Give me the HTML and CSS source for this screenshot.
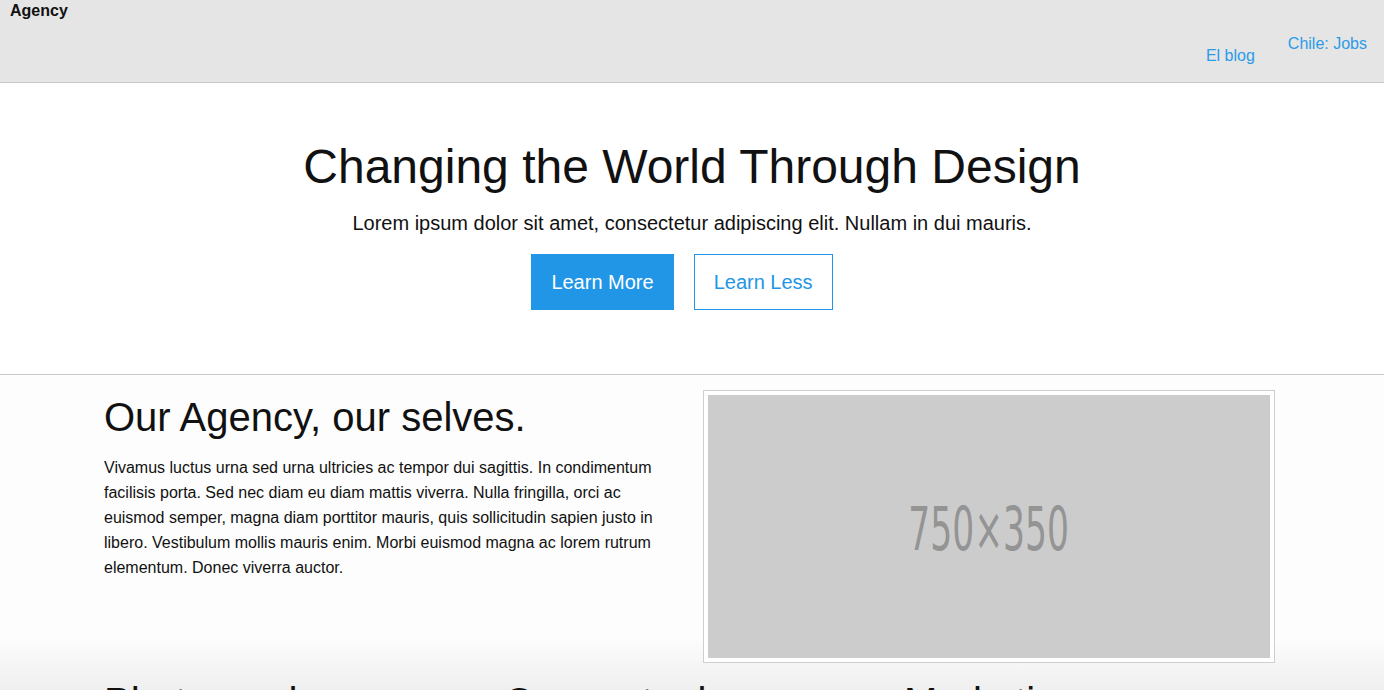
FILE: index.html
```html
<!DOCTYPE html>
<html lang="en">
<head>
<meta charset="utf-8">
<title>Agency</title>
<link rel="stylesheet" href="styles.css">
</head>
<body>
<header class="site-header">
  <div class="brand">Agency</div>
  <nav class="nav">
    <a class="nav-link nav-link-low" href="#">El blog</a>
    <a class="nav-link nav-link-high" href="#">Chile: Jobs</a>
  </nav>
</header>

<section class="hero">
  <h1 class="hero-title">Changing the World Through Design</h1>
  <p class="hero-lead">Lorem ipsum dolor sit amet, consectetur adipiscing elit. Nullam in dui mauris.</p>
  <div class="hero-actions">
    <a class="btn btn-solid" href="#">Learn More</a>
    <a class="btn btn-outline" href="#">Learn Less</a>
  </div>
</section>

<div class="lower">
  <section class="about container">
    <div class="about-text">
      <h2 class="section-title">Our Agency, our selves.</h2>
      <p class="about-copy">Vivamus luctus urna sed urna ultricies ac tempor dui sagittis. In condimentum facilisis porta. Sed nec diam eu diam mattis viverra. Nulla fringilla, orci ac euismod semper, magna diam porttitor mauris, quis sollicitudin sapien justo in libero. Vestibulum mollis mauris enim. Morbi euismod magna ac lorem rutrum elementum. Donec viverra auctor.</p>
    </div>
    <div class="thumb">
      <div class="thumb-inner"><span class="thumb-label">750×350</span></div>
    </div>
  </section>

  <section class="features container">
    <div class="feature"><h2 class="section-title">Photography</h2></div>
    <div class="feature"><h2 class="section-title">Conceptual</h2></div>
    <div class="feature"><h2 class="section-title">Marketing</h2></div>
  </section>
</div>
</body>
</html>
```

FILE: styles.css
```css
html, body {
  margin: 0;
  padding: 0;
}

body {
  font-family: "Liberation Sans", Arial, sans-serif;
  color: #111;
  background: #fff;
  overflow: hidden;
}

a {
  text-decoration: none;
}

.site-header {
  height: 82px;
  background: #e5e5e5;
  border-bottom: 1px solid #c8c8c8;
  display: flex;
  justify-content: space-between;
  align-items: flex-start;
  padding: 0 17px 0 10px;
}

.brand {
  font-weight: bold;
  font-size: 16px;
  line-height: 20px;
  margin-top: 1px;
}

.nav {
  display: flex;
  gap: 33px;
  align-items: flex-start;
}

.nav-link {
  color: #2b9be8;
  font-size: 16px;
  line-height: 20px;
}

.nav-link-low {
  margin-top: 46px;
}

.nav-link-high {
  margin-top: 34px;
}

.hero {
  text-align: center;
  padding: 56px 0 64px;
  border-bottom: 1px solid #c8c8c8;
}

.hero-title {
  margin: 0;
  font-weight: normal;
  font-size: 48px;
  line-height: 55px;
}

.hero-lead {
  margin: 17px 0 19px;
  font-size: 20px;
  line-height: 24px;
}

.hero-actions {
  display: flex;
  justify-content: center;
}

.btn {
  display: inline-block;
  font-size: 20px;
  line-height: 24px;
  padding: 16px 20px;
  box-sizing: border-box;
  height: 56px;
  margin-right: 20px;
}

.btn-solid {
  background: #2196e6;
  color: #fff;
}

.btn-outline {
  border: 1px solid #2196e6;
  color: #2196e6;
  padding: 15px 19px;
}

.lower {
  background: linear-gradient(to bottom, #fdfdfd 0, #fdfdfd 262px, #efefef 315px);
  height: 315px;
}

.container {
  width: 1171px;
  margin-left: 104px;
}

.about {
  display: grid;
  grid-template-columns: 570px 572px;
  column-gap: 29px;
  padding-top: 15px;
}

.section-title {
  margin: 0;
  font-weight: normal;
  font-size: 40px;
  line-height: 46px;
}

.about-text .section-title {
  margin-top: 4px;
}

.about-copy {
  margin: 15px 0 0;
  font-size: 16px;
  line-height: 25px;
}

.thumb {
  border: 1px solid #cfcfcf;
  padding: 4px;
  background: #fff;
}

.thumb-inner {
  height: 263px;
  background: #cccccc;
  display: flex;
  align-items: center;
  justify-content: center;
}

.thumb-label {
  display: inline-block;
  font-family: "DejaVu Sans Condensed", "DejaVu Sans", sans-serif;
  font-size: 60px;
  line-height: 60px;
  color: #949494;
  transform: scaleX(0.64);
  margin-top: 4px;
}

.features {
  display: grid;
  grid-template-columns: repeat(3, 370px);
  column-gap: 30px;
  padding-top: 16px;
}
```
